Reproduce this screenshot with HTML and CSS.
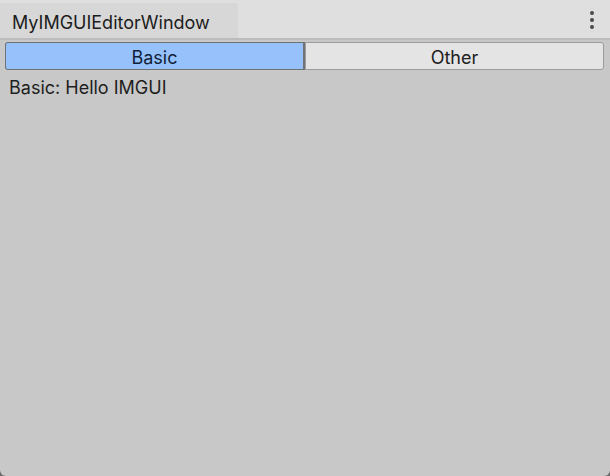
FILE: index.html
```html
<!DOCTYPE html>
<html lang="en">
<head>
    <meta charset="UTF-8">
    <meta name="viewport" content="width=device-width, initial-scale=1.0">
    <title>MyIMGUIEditorWindow</title>
    <link rel="stylesheet" href="styles.css">
</head>
<body>
    <div class="window">
        <div class="tabbar">
            <div class="tab">MyIMGUIEditorWindow</div>
            <div class="menu">
                <span class="dot"></span>
                <span class="dot"></span>
                <span class="dot"></span>
            </div>
        </div>
        <div class="content">
            <div class="toolbar">
                <button class="seg seg-left active">Basic</button>
                <button class="seg seg-right">Other</button>
            </div>
            <div class="label">Basic: Hello IMGUI</div>
        </div>
    </div>
</body>
</html>
```

FILE: styles.css
```css
html, body {
    margin: 0;
    padding: 0;
    background: #6a6a6a;
}
body {
    font-family: Inter, "Noto Sans", sans-serif;
    width: 610px;
    height: 476px;
    overflow: hidden;
}
.window {
    height: 476px;
    display: flex;
    flex-direction: column;
    background: #c8c8c8;
    border-radius: 0 0 6px 6px;
    overflow: hidden;
}
.tabbar {
    height: 38px;
    background: #dfdfdf;
    display: flex;
    align-items: flex-end;
    justify-content: space-between;
    border-bottom: 2px solid #bcbcbc;
}
.tab {
    width: 226px;
    height: 35px;
    padding-left: 12px;
    background: #d7d7d7;
    border-top-right-radius: 3px;
    color: #1c1c1c;
    font-size: 18px;
    line-height: 39px;
}
.menu {
    align-self: flex-start;
    display: flex;
    flex-direction: column;
    gap: 3px;
    padding: 11px 16px 0 0;
}
.dot {
    width: 4px;
    height: 4px;
    border-radius: 50%;
    background: #4a4a4a;
}
.content {
    flex: 1;
    padding: 2px 6px 0 5px;
}
.toolbar {
    display: flex;
    height: 28px;
}
.seg {
    flex: 1;
    margin: 0;
    padding: 2px 0 0;
    font-family: inherit;
    font-size: 18px;
    color: #202020;
    background: #e4e4e4;
    border: 1px solid #9c9c9c;
}
.seg-left {
    border-radius: 3px 0 0 3px;
    border-right: none;
}
.seg-right {
    border-radius: 0 3px 3px 0;
}
.seg.active {
    background: #97c1fb;
    border-color: #6f7378;
    border-right: 2px solid #6f7378;
    color: #10223a;
}
.label {
    margin: 7px 0 0 4px;
    font-size: 18px;
    color: #1e1e1e;
}
```
